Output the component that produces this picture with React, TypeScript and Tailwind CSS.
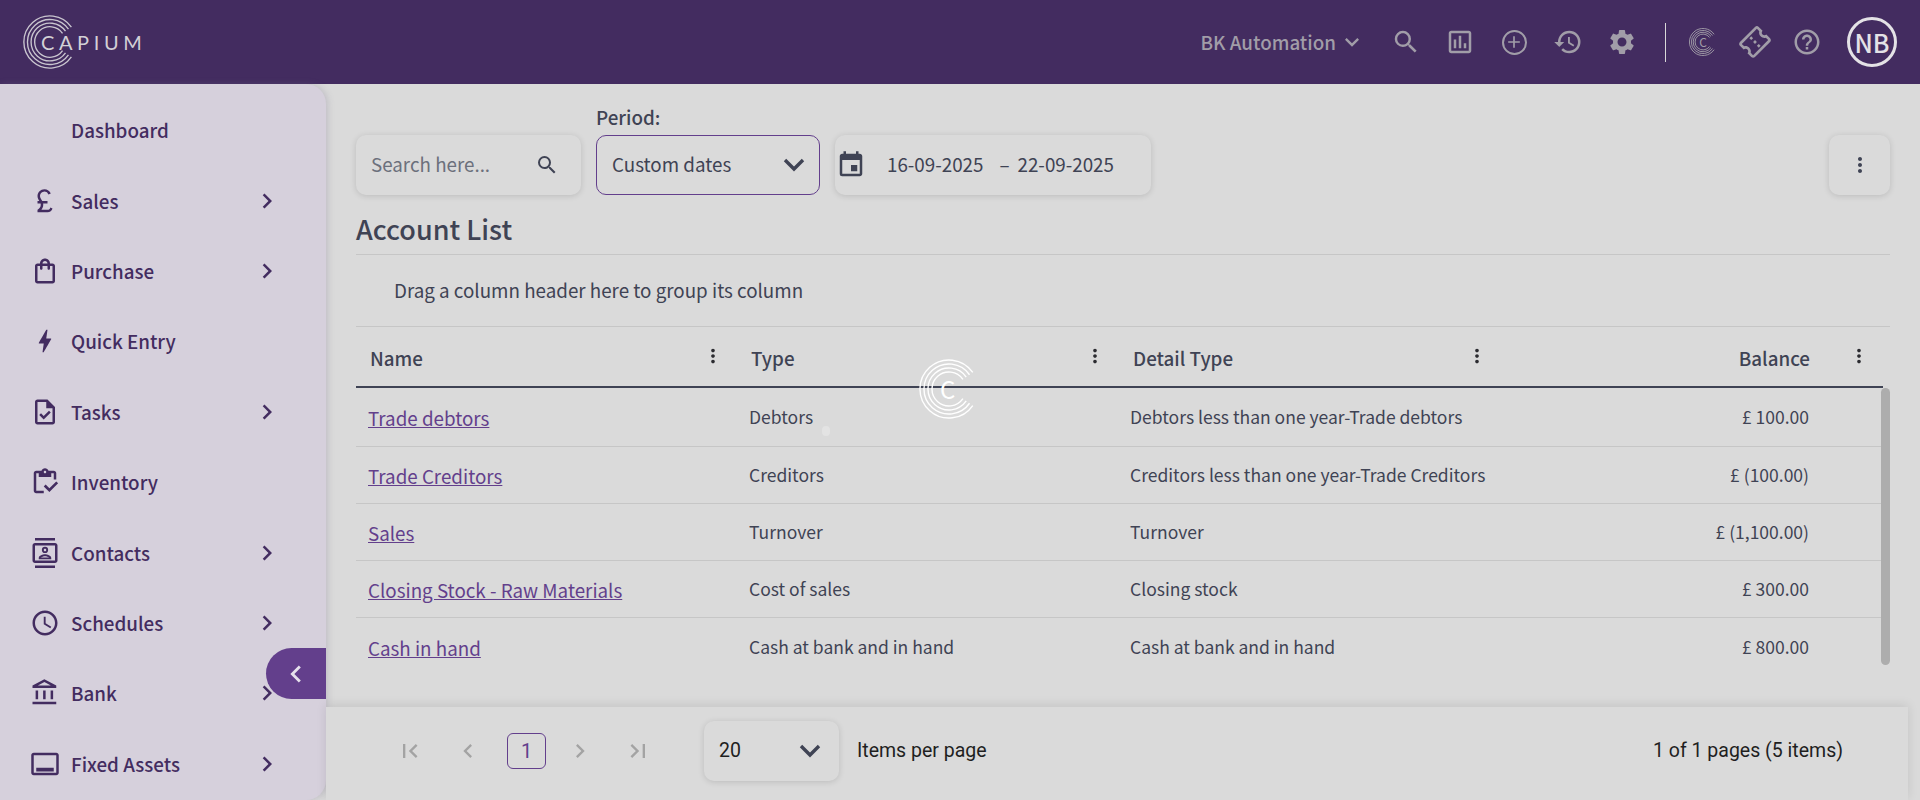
import type { IconType } from 'react-icons';
import {
  MdAdd,
  MdBolt,
  MdChevronLeft,
  MdChevronRight,
  MdCurrencyPound,
  MdEvent,
  MdFirstPage,
  MdHelpOutline,
  MdHistory,
  MdKeyboardArrowDown,
  MdLastPage,
  MdMoreVert,
  MdOutlineAccountBalance,
  MdOutlineAssessment,
  MdOutlineCallToAction,
  MdOutlineConfirmationNumber,
  MdOutlineContacts,
  MdOutlineInventory,
  MdOutlineSchedule,
  MdOutlineShoppingBag,
  MdOutlineTask,
  MdSearch,
  MdSettings,
} from 'react-icons/md';

const nav: { label: string; icon?: IconType; arrow?: boolean }[] = [
  { label: 'Dashboard' },
  { label: 'Sales', icon: MdCurrencyPound, arrow: true },
  { label: 'Purchase', icon: MdOutlineShoppingBag, arrow: true },
  { label: 'Quick Entry', icon: MdBolt },
  { label: 'Tasks', icon: MdOutlineTask, arrow: true },
  { label: 'Inventory', icon: MdOutlineInventory },
  { label: 'Contacts', icon: MdOutlineContacts, arrow: true },
  { label: 'Schedules', icon: MdOutlineSchedule, arrow: true },
  { label: 'Bank', icon: MdOutlineAccountBalance, arrow: true },
  { label: 'Fixed Assets', icon: MdOutlineCallToAction, arrow: true },
];

const rows = [
  ['Trade debtors', 'Debtors', 'Debtors less than one year-Trade debtors', '£ 100.00'],
  ['Trade Creditors', 'Creditors', 'Creditors less than one year-Trade Creditors', '£ (100.00)'],
  ['Sales', 'Turnover', 'Turnover', '£ (1,100.00)'],
  ['Closing Stock - Raw Materials', 'Cost of sales', 'Closing stock', '£ 300.00'],
  ['Cash in hand', 'Cash at bank and in hand', 'Cash at bank and in hand', '£ 800.00'],
];

// rings open on the right, same mark in the header and the loader
function Rings({ size, color, width }: { size: number; color: string; width: number }) {
  const radii = [29, 25, 21, 17];
  return (
    <svg width={size} height={size} viewBox="0 0 60 60" fill="none" stroke={color} strokeWidth={width}>
      {radii.map((r) => {
        const dx = r * 0.82;
        const dy = r * 0.57;
        return <path key={r} d={`M${30 + dx} ${30 - dy}A${r} ${r} 0 1 0 ${30 + dx} ${30 + dy}`} />;
      })}
    </svg>
  );
}

function TopIcon({ icon: Icon, size = 30 }: { icon: IconType; size?: number }) {
  return (
    <span className="flex w-[54px] justify-center">
      <Icon size={size} />
    </span>
  );
}

function HeavyChevron() {
  return (
    <svg width="22" height="14" viewBox="0 0 22 14" fill="none" stroke="#3f4354" strokeWidth="3.4">
      <path d="M2 2l9 9 9-9" />
    </svg>
  );
}

export default function App() {
  return (
    <div className="flex h-[800px] w-[1920px] flex-col overflow-hidden bg-[#dadada] font-['Noto_Sans_CJK_SC',sans-serif] text-[#3f4354]">
      <header className="flex h-[84px] shrink-0 items-center bg-[#432c60] pl-[23px] text-[#a19da8]">
        <div className="flex items-center">
          <Rings size={54} color="#c9c5cf" width={1.5} />
          <span className="-ml-[36px] font-['Lato',sans-serif] text-[20px] font-normal tracking-[4.6px] text-[#d3d0d6]">
            CAPIUM
          </span>
        </div>
        <div className="ml-auto flex items-center pr-[23px]">
          <span className="text-[18.8px] leading-[26px] font-medium">BK Automation</span>
          <MdKeyboardArrowDown size={28} className="ml-[2px] mr-[13px]" />
          <TopIcon icon={MdSearch} />
          <TopIcon icon={MdOutlineAssessment} />
          <span className="flex w-[54px] justify-center">
            <span className="flex size-[25px] items-center justify-center rounded-full border-[2.5px] border-[#a19da8]">
              <MdAdd size={20} />
            </span>
          </span>
          <TopIcon icon={MdHistory} />
          <TopIcon icon={MdSettings} />
          <div className="ml-[16px] mr-[15px] h-[39px] w-px bg-[#d8d8d8]" />
          <span className="relative flex w-[44px] justify-center">
            <Rings size={28} color="#a19da8" width={2} />
            <span className="absolute top-[5px] text-[12px] leading-[18px]">C</span>
          </span>
          <span className="flex w-[60px] justify-center">
            <MdOutlineConfirmationNumber size={32} className="-rotate-45" />
          </span>
          <span className="flex w-[44px] justify-center">
            <MdHelpOutline size={30} />
          </span>
          <div className="ml-[18px] flex size-[50px] items-center justify-center rounded-full border-[3px] border-[#e4e2e6] text-[25px] leading-none font-medium text-[#e4e2e6]">
            NB
          </div>
        </div>
      </header>

      <div className="flex min-h-0 flex-1">
        <aside className="relative w-[326px] shrink-0 rounded-tr-[20px] rounded-br-[20px] bg-[#d6d0dc] pt-[11px] shadow-[2px_0_6px_rgba(120,110,140,0.25)]">
          {nav.map(({ label, icon: Icon, arrow }) => (
            <div key={label} className="flex h-[70.4px] items-center text-[#432c60]">
              <span className="flex w-[71px] justify-center pl-[25px] pr-[6px]">
                {Icon && <Icon size={30} />}
              </span>
              <span className="text-[18.8px] leading-[26px] font-medium">{label}</span>
              {arrow && <MdChevronRight size={30} className="absolute left-[252px]" />}
            </div>
          ))}
          <div className="absolute top-[564px] right-0 flex h-[51px] w-[60px] items-center rounded-l-full bg-[#633f8c] pl-[13px] text-[#e6e1ec]">
            <MdChevronLeft size={34} />
          </div>
        </aside>

        <main className="relative flex min-w-0 flex-1 flex-col">
          <div className="px-[30px] pt-[20px]">
            <div className="flex items-end gap-[15px]">
              <div className="flex h-[60px] w-[225px] items-center justify-between rounded-[10px] pl-[15px] pr-[22px] text-[#6c707c] shadow-[0_1px_6px_rgba(0,0,0,0.14)]">
                <span className="-mt-[2px] text-[18.8px]">Search here...</span>
                <MdSearch size={24} className="text-[#3f4354]" />
              </div>
              <div>
                <div className="mb-[5px] text-[18.8px] leading-[26px] font-medium">Period:</div>
                <div className="flex h-[60px] w-[224px] items-center justify-between rounded-[10px] border border-[#633f8c] pl-[15px] pr-[14px]">
                  <span className="-mt-[2px] text-[18.8px]">Custom dates</span>
                  <HeavyChevron />
                </div>
              </div>
              <div className="flex h-[60px] w-[316px] items-center rounded-[10px] text-[18.8px] shadow-[0_1px_6px_rgba(0,0,0,0.14)]">
                <MdEvent size={30} className="ml-[1px]" />
                <span className="-mt-[2px] ml-[21px]">16-09-2025</span>
                <span className="-mt-[2px] ml-[16px]">–</span>
                <span className="-mt-[2px] ml-[8px]">22-09-2025</span>
              </div>
              <div className="ml-auto flex h-[60px] w-[61px] items-center justify-center rounded-[10px] shadow-[0_1px_6px_rgba(0,0,0,0.14)]">
                <MdMoreVert size={24} />
              </div>
            </div>

            <h1 className="mt-[18px] h-[42px] border-b border-[#c6c6c6] text-[27px] leading-[32px] font-medium">
              Account List
            </h1>
            <div className="flex h-[72px] items-center border-b border-[#c6c6c6] pb-[2px] pl-[38px] text-[18.8px] leading-[26px]">
              Drag a column header here to group its column
            </div>

            <div className="relative pr-[7px]">
              <div className="grid h-[61px] grid-cols-[381px_381px_381px_384px] items-center border-b-2 border-[#3f4354] pt-[2px] text-[18.8px] leading-[26px] font-medium">
                <div className="flex items-center justify-between pl-[14px] pr-[13px]">
                  <span>Name</span>
                  <MdMoreVert size={22} className="-mt-[3px] text-[#2b2b30]" />
                </div>
                <div className="flex items-center justify-between pl-[14px] pr-[12px]">
                  <span>Type</span>
                  <MdMoreVert size={22} className="-mt-[3px] text-[#2b2b30]" />
                </div>
                <div className="flex items-center justify-between pl-[15px] pr-[11px]">
                  <span>Detail Type</span>
                  <MdMoreVert size={22} className="-mt-[3px] text-[#2b2b30]" />
                </div>
                <div className="flex items-center justify-end pr-[13px]">
                  <span className="mr-[38px]">Balance</span>
                  <MdMoreVert size={22} className="-mt-[3px] text-[#2b2b30]" />
                </div>
              </div>
              <div className="-mr-[7px]">
                {rows.map(([name, type, detail, balance], i) => (
                  <div
                    key={name}
                    className={`grid grid-cols-[381px_381px_381px_384px] items-center text-[17.5px] leading-[24px] ${
                      i === 0 ? 'h-[59px]' : 'h-[57px]'
                    } ${i < rows.length - 1 ? 'border-b border-[#c6c6c6]' : ''}`}
                  >
                    <a className="pl-[12px] pt-[2px] text-[18.8px] leading-[26px] text-[#633f8c] underline">{name}</a>
                    <span className="pl-[12px]">{type}</span>
                    <span className="pl-[12px]">{detail}</span>
                    <span className="pr-[74px] text-right">{balance}</span>
                  </div>
                ))}
              </div>
              <div className="absolute top-[61px] right-0 h-[277px] w-[9px] rounded-full bg-[#adadad]" />
            </div>
          </div>

          <div className="absolute top-[623px] left-0 flex h-[93px] w-[1582px] items-center bg-[#dadada] pb-[5px] font-['Roboto',sans-serif] text-[19.5px] text-[#1f1f1f] shadow-[0_-2px_10px_rgba(0,0,0,0.1)]">
            <div className="ml-[69px] flex items-center text-[#a3a3a3]">
              <span className="flex w-[30px] justify-center">
                <MdFirstPage size={28} />
              </span>
              <span className="ml-[28px] flex w-[30px] justify-center">
                <MdChevronLeft size={28} />
              </span>
              <span className="ml-[24px] flex h-[36px] w-[39px] items-center justify-center rounded-[6px] border border-[#633f8c] text-[20px] text-[#633f8c]">
                1
              </span>
              <span className="ml-[19px] flex w-[30px] justify-center">
                <MdChevronRight size={28} />
              </span>
              <span className="ml-[28px] flex w-[30px] justify-center">
                <MdLastPage size={28} />
              </span>
            </div>
            <div className="ml-[51px] flex h-[60px] w-[135px] items-center justify-between rounded-[10px] pl-[15px] pr-[18px] shadow-[0_1px_6px_rgba(0,0,0,0.14)]">
              <span>20</span>
              <HeavyChevron />
            </div>
            <span className="ml-[18px]">Items per page</span>
            <span className="ml-auto mr-[65px]">1 of 1 pages (5 items)</span>
          </div>

          {/* loader sits over the table */}
          <div className="absolute top-[275px] left-[593px]">
            <Rings size={60} color="#ffffff" width={1.4} />
            <span className="absolute top-[16px] left-[21px] text-[24px] leading-[28px] text-white">C</span>
          </div>
          <div className="absolute top-[342px] left-[496px] h-[10px] w-[8px] rounded-full bg-[#e3e3e3]" />
        </main>
      </div>
    </div>
  );
}
